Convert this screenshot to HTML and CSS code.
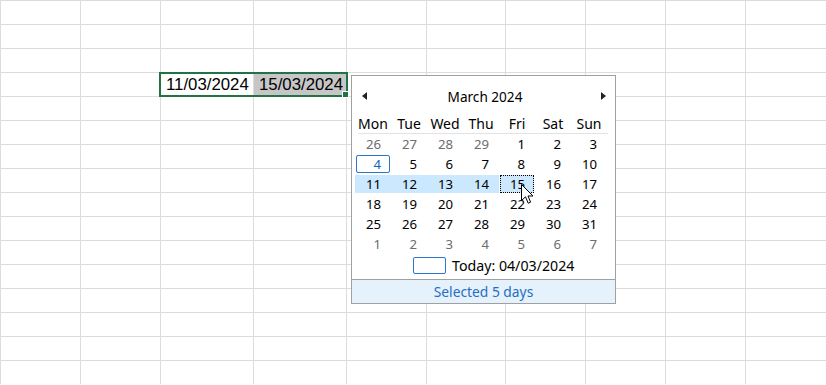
FILE: index.html
```html
<!DOCTYPE html>
<html lang="en">
<head>
  <meta charset="UTF-8">
  <meta name="viewport" content="width=device-width, initial-scale=1.0">
  <title>Date range picker</title>
  <link rel="stylesheet" href="styles.css">
</head>
<body>
  <div id="sheet" class="sheet"></div>

  <div class="selection"><span class="handle"></span></div>

  <div class="calendar">
    <div class="cal-head">
      <span class="arrow left"></span>
      <span class="month">March 2024</span>
      <span class="arrow right"></span>
    </div>
    <div class="week">
      <span>Mon</span><span>Tue</span><span>Wed</span><span>Thu</span><span>Fri</span><span>Sat</span><span>Sun</span>
    </div>
    <div class="rule"></div>
    <div class="days">
      <span class="day other">26</span><span class="day other">27</span><span class="day other">28</span><span class="day other">29</span><span class="day">1</span><span class="day">2</span><span class="day">3</span>
      <span class="day today">4</span><span class="day">5</span><span class="day">6</span><span class="day">7</span><span class="day">8</span><span class="day">9</span><span class="day">10</span>
      <span class="day range">11</span><span class="day range">12</span><span class="day range">13</span><span class="day range">14</span><span class="day focus">15</span><span class="day">16</span><span class="day">17</span>
      <span class="day">18</span><span class="day">19</span><span class="day">20</span><span class="day">21</span><span class="day">22</span><span class="day">23</span><span class="day">24</span>
      <span class="day">25</span><span class="day">26</span><span class="day">27</span><span class="day">28</span><span class="day">29</span><span class="day">30</span><span class="day">31</span>
      <span class="day other">1</span><span class="day other">2</span><span class="day other">3</span><span class="day other">4</span><span class="day other">5</span><span class="day other">6</span><span class="day other">7</span>
    </div>
    <div class="today-row">
      <span class="today-box"></span>
      <span>Today: 04/03/2024</span>
    </div>
    <div class="footer">Selected 5 days</div>
  </div>

  <svg class="cursor" width="13" height="21" viewBox="0 0 13 21">
    <path d="M0.5 0.5 L0.5 16.5 L4.5 12.8 L7.2 19.2 L9.6 18.2 L7 12 L12 12 Z" fill="#fff" stroke="#000" stroke-width="1" stroke-linejoin="round"/>
  </svg>

  <script>
    // build the empty worksheet cells, two of them hold the picked dates
    const sheet = document.getElementById('sheet');
    const values = { '3-2': '11/03/2024', '3-3': '15/03/2024' };

    for (let r = 0; r < 16; r++) {
      for (let c = 0; c < 10; c++) {
        const cell = document.createElement('div');
        cell.className = 'cell';
        const key = r + '-' + c;
        if (values[key]) {
          cell.textContent = values[key];
          if (c === 3) cell.classList.add('picked');
        }
        sheet.appendChild(cell);
      }
    }
  </script>
</body>
</html>
```

FILE: styles.css
```css
body {
  margin: 0;
  width: 826px;
  height: 385px;
  overflow: hidden;
  position: relative;
  background: #fff;
}

.sheet {
  display: grid;
  grid-template-columns: 79px 79px 92px 92px 79px 78px 79px 79px 79px 1fr;
  grid-auto-rows: 23px;
  gap: 1px;
  padding: 1px 0 0 1px;
  background: #dcdcdc;
  font-family: 'Liberation Sans', Arial, sans-serif;
  font-size: 16.8px;
  color: #000;
}

.cell {
  background: #fff;
  line-height: 23px;
  padding-left: 5px;
  white-space: nowrap;
  overflow: hidden;
}

.cell.picked {
  background: #c6c6c6;
}

/* selected range on the sheet */
.selection {
  position: absolute;
  left: 159px;
  top: 72px;
  width: 189px;
  height: 25px;
  box-sizing: border-box;
  border: 2px solid #217346;
}

.handle {
  position: absolute;
  right: -3px;
  bottom: -3px;
  width: 5px;
  height: 5px;
  background: #217346;
  border: 1px solid #fff;
}

/* date picker popup */
.calendar {
  position: absolute;
  left: 351px;
  top: 75px;
  width: 265px;
  height: 229px;
  box-sizing: border-box;
  border: 1px solid #a0a0a0;
  background: #fff;
  display: flex;
  flex-direction: column;
  font-family: 'Noto Sans', sans-serif;
  font-size: 13.2px;
  color: #000;
}

.cal-head {
  display: flex;
  align-items: center;
  justify-content: space-between;
  height: 22px;
  margin: 9px 9px 7px 10px;
}

.month {
  font-size: 13.6px;
  margin-left: 2px;
}

.arrow {
  width: 0;
  height: 0;
  border-top: 4px solid transparent;
  border-bottom: 4px solid transparent;
}

.arrow.left {
  border-right: 5px solid #222;
}

.arrow.right {
  border-left: 5px solid #222;
}

.week {
  display: grid;
  grid-template-columns: repeat(7, 36px);
  margin-left: 3px;
  height: 19px;
  line-height: 19px;
  text-align: center;
  font-size: 14px;
}

.rule {
  height: 1px;
  margin: 0 7px 0 6px;
  background: #e3e3e3;
}

.days {
  display: grid;
  grid-template-columns: repeat(7, 36px);
  grid-auto-rows: 20px;
  margin-left: 3px;
}

.day {
  text-align: right;
  padding-right: 10px;
  line-height: 20px;
}

.day.other {
  color: #6d6d6d;
}

.day.today {
  margin: 1px;
  border: 1px solid #2b76cc;
  border-radius: 2px;
  line-height: 16px;
  padding-right: 8px;
  color: #0f62c0;
}

.day.range {
  margin: 1px 0;
  line-height: 18px;
  background: #cce8ff;
}

.day.focus {
  margin: 1px;
  border: 1px dotted #000;
  line-height: 16px;
  padding-right: 8px;
  background: #cce8ff;
}

.today-row {
  display: flex;
  align-items: center;
  gap: 6px;
  height: 22px;
  padding-left: 61px;
  font-size: 14.2px;
}

.today-box {
  width: 33px;
  height: 17px;
  box-sizing: border-box;
  border: 1px solid #2b76cc;
  border-radius: 2px;
}

.footer {
  margin-top: auto;
  height: 24px;
  box-sizing: border-box;
  border-top: 1px solid #a0a0a0;
  background: #e5f1fb;
  color: #1f6fc5;
  text-align: center;
  line-height: 23px;
  font-size: 13.8px;
}

.cursor {
  position: absolute;
  left: 521px;
  top: 184px;
}
```
